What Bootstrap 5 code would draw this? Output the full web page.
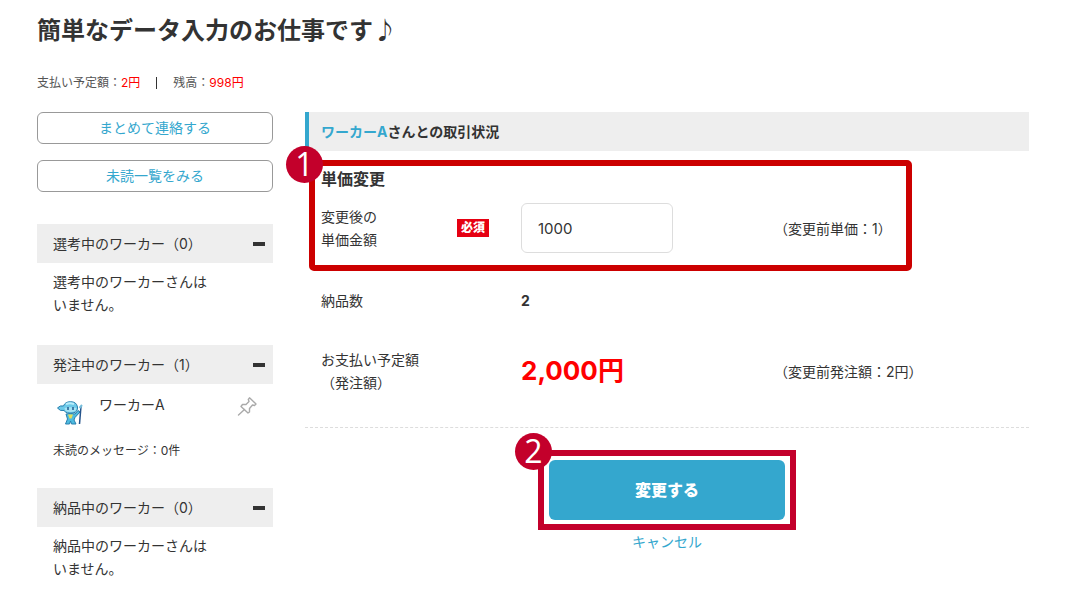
<!DOCTYPE html>
<html lang="ja">
<head>
<meta charset="utf-8">
<meta name="viewport" content="width=device-width, initial-scale=1">
<title>単価変更</title>
<link rel="stylesheet" href="https://cdn.jsdelivr.net/npm/bootstrap@5.3.0/dist/css/bootstrap.min.css">
<style>
  body { font-family: Inter, "Noto Sans CJK JP", sans-serif; font-size: 14px; line-height: 23px; color: #333; }
  a { color: #34a7ce; text-decoration: none; }
  .page { padding: 19px 43px 0 37px; }
  .page-title { font-size: 24px; line-height: 24px; margin-bottom: 28px; }
  .budget { font-size: 12px; margin-bottom: 18px; color: #555; }
  .budget-sep { width: 1px; height: 12px; background: #333; }
  .amount { color: #f00; }
  .side { width: 236px; }
  .btn-side { height: 32px; padding: 0; font-size: 14px; line-height: 28px; color: #34a7ce; border: 1px solid #999; border-radius: 6px; background: #fff; }
  .bar { background: #eee; height: 39px; font-size: 14px; line-height: 23px; }
  .side .bar { padding: 0 8px 0 16px; }
  .toggle { width: 12px; height: 4px; padding: 0; border: 0; background: #333; }
  .side-body { padding: 7px 16px 0; margin-bottom: 29px; }
  .side-body.worker { padding-top: 9px; margin-bottom: 26px; }
  .worker-row { height: 46px; }
  .unread { font-size: 12px; }
  .pin { width: 20px; height: 20px; padding: 0; border: 0; background: none; line-height: 0; }
  .deal-bar { border-left: 4px solid #34a7ce; padding-left: 12px; }
  .deal-body { padding: 16px 16px 33px; border-bottom: 1px dashed #ddd; }
  .sub-title { font-size: 16px; line-height: 24px; margin-bottom: 12px; }
  .line { display: grid; grid-template-columns: 136px 64px 1fr 239px; align-items: center; margin-bottom: 36px; }
  .line:last-child { margin-bottom: 0; }
  .required { background: #e60012; color: #fff; font-size: 12px; font-weight: 900; line-height: 18px; padding: 0 4px; }
  .price { width: 152px; height: 50px; padding: 0 16px; font-size: 15px; color: #333; border-color: #ddd; border-radius: 6px; }
  .total { font-size: 26px; line-height: 46px; }
  .mark-price { position: absolute; top: 48px; left: 4px; right: 117px; height: 111px; border: 6px solid #c00; border-radius: 5px; pointer-events: none; }
  .mark-submit { width: 258px; margin-top: 22px; padding: 4px 5px; border: 6px solid #c3002b; }
  .btn-submit { height: 60px; font-size: 16px; font-weight: 900; color: #fff; background: #34a7ce; border: 0; border-radius: 6px; }
  .step { position: absolute; top: -20px; left: -29px; width: 37px; height: 37px; border-radius: 50%; background: #c3002b; color: #fff; font: 32px/35px "Open Sans", sans-serif; text-align: center; }
  .mark-submit .step { top: -23px; }
</style>
</head>
<body>
<div class="page">
  <h1 class="page-title fw-bold">簡単なデータ入力のお仕事です♪</h1>
  <div class="budget d-flex align-items-center gap-3">
    <span>支払い予定額：<span class="amount">2円</span></span>
    <span class="budget-sep"></span>
    <span>残高：<span class="amount">998円</span></span>
  </div>

  <div class="d-flex align-items-start">
    <aside class="side flex-shrink-0">
      <div class="d-grid gap-3 mb-4 pb-2">
        <button type="button" class="btn btn-side">まとめて連絡する</button>
        <button type="button" class="btn btn-side">未読一覧をみる</button>
      </div>

      <div class="bar d-flex align-items-center justify-content-between">
        <span>選考中のワーカー（0）</span>
        <button type="button" class="toggle" aria-label="閉じる"></button>
      </div>
      <div class="side-body">選考中のワーカーさんは<br>いません。</div>

      <div class="bar d-flex align-items-center justify-content-between">
        <span>発注中のワーカー（1）</span>
        <button type="button" class="toggle" aria-label="閉じる"></button>
      </div>
      <div class="side-body worker">
        <div class="worker-row d-flex align-items-start">
          <svg class="mt-2 ms-1 me-3" width="26" height="26" viewBox="0 0 26 26" aria-hidden="true">
            <path d="M.500 7Q3 4 6.500 5Q8 .700 13.500 .700Q19.500 .700 20.500 6Q21 11 16 12Q9.500 13 7 9.500Q3 10.500 .500 7Z" fill="#6cc9e8" stroke="#287fae"/>
            <path d="M9 3Q13 1.500 17 3" fill="none" stroke="#b9edfa" stroke-width="2"/>
            <path d="M7.500 7Q13 5.500 19.500 7L18.500 10Q13 12 8.500 10Z" fill="#a6e4f5"/>
            <path d="M11 6v3M16 6v3" stroke="#205c91" stroke-width="1.500"/>
            <path d="M9 13Q13 12 18 13L21 9.500L23 11L18 16.500L17 19L19 23H14.500L13.500 20L12.500 23H8.500L10.500 18Z" fill="#4dbbe0" stroke="#287fae"/>
            <path d="M11 13.500h5l-1.500 4h-2Z" fill="#e3dc5b"/>
            <path d="M24 5L22.500 23" stroke="#24538b" stroke-width="1.500"/>
            <path d="M22.500 7l2.500-3" stroke="#75bddb" stroke-width="2"/>
          </svg>
          <span class="flex-grow-1">ワーカーA</span>
          <button type="button" class="pin mt-1" aria-label="ピン留め">
            <svg width="20" height="20" viewBox="0 0 20 20" fill="none" stroke="#aaa" stroke-width="1.400" stroke-linejoin="round" stroke-linecap="round">
              <path d="M12.500 .800L19 7L17.500 8.500L15.500 8L12.500 11.500V15L11 16L4 9.500L5.500 7.500H9L12 4.500L11.300 2.500Z"/>
              <path d="M7.500 12.500L1.500 18"/>
            </svg>
          </button>
        </div>
        <div class="unread">未読のメッセージ：0件</div>
      </div>

      <div class="bar d-flex align-items-center justify-content-between">
        <span>納品中のワーカー（0）</span>
        <button type="button" class="toggle" aria-label="閉じる"></button>
      </div>
      <div class="side-body mb-0">納品中のワーカーさんは<br>いません。</div>
    </aside>

    <main class="flex-grow-1 ms-4 ps-2">
      <form class="position-relative">
        <h2 class="bar deal-bar d-flex align-items-center fw-bold mb-0"><a href="#">ワーカーA</a>さんとの取引状況</h2>
        <div class="deal-body">
          <h3 class="sub-title fw-bold">単価変更</h3>
          <div class="line">
            <label for="price">変更後の<br>単価金額</label>
            <div class="d-flex"><span class="required">必須</span></div>
            <div><input id="price" type="text" class="form-control price" value="1000"></div>
            <div>（変更前単価：1）</div>
          </div>
          <div class="line">
            <div>納品数</div>
            <div></div>
            <div class="fw-bold">2</div>
            <div></div>
          </div>
          <div class="line">
            <div>お支払い予定額<br>（発注額）</div>
            <div></div>
            <div class="total amount fw-bold">2,000円</div>
            <div>（変更前発注額：2円）</div>
          </div>
        </div>
        <div class="mark-price"><span class="step">1</span></div>
        <div class="mark-submit position-relative mx-auto">
          <button type="submit" class="btn btn-submit w-100">変更する</button>
          <span class="step">2</span>
        </div>
        <div class="text-center"><a href="#">キャンセル</a></div>
      </form>
    </main>
  </div>
</div>
<script src="https://cdn.jsdelivr.net/npm/bootstrap@5.3.0/dist/js/bootstrap.bundle.min.js"></script>
</body>
</html>
